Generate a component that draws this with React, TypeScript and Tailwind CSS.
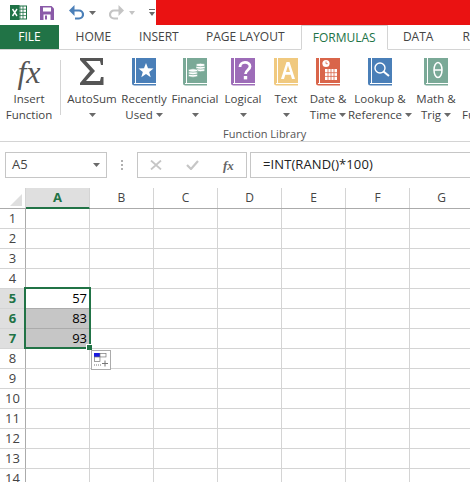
import type { ReactNode } from "react";

const font = { fontFamily: '"Open Sans", "Liberation Sans", sans-serif' };

function Caret({ className = "" }: { className?: string }) {
  return (
    <svg width="7" height="4" viewBox="0 0 7 4" className={className}>
      <path d="M0 0h7L3.5 4z" fill="#6a6a6a" />
    </svg>
  );
}

// book shaped icon used by most of the function library buttons
function Book({ color, children }: { color: string; children: ReactNode }) {
  return (
    <svg width="24" height="28" viewBox="0 0 24 28">
      <path d="M0 0h3v25h-1v1h22v1.500H2.500Q0 27.500 0 25z" fill={color} />
      <rect x="4" y="0" width="20" height="25" fill={color} />
      {children}
    </svg>
  );
}

const tileIcons: Record<string, ReactNode> = {
  recent: (
    <Book color="#4a7fb8">
      <path d="M14 5l2 5.200 5.500.3-4.300 3.500 1.500 5.300L14 16l-4.700 3.300 1.500-5.300-4.300-3.500 5.500-.3z" fill="#fff" />
    </Book>
  ),
  financial: (
    <Book color="#7aa997">
      <g fill="#fff" stroke="#7aa997" strokeWidth="0.7">
        <ellipse cx="17.500" cy="12" rx="4.600" ry="1.700" />
        <ellipse cx="17.500" cy="9.500" rx="4.600" ry="1.700" />
        <ellipse cx="17.500" cy="7" rx="4.600" ry="1.700" />
        <ellipse cx="10" cy="17.500" rx="4.600" ry="1.700" />
        <ellipse cx="10" cy="15" rx="4.600" ry="1.700" />
        <ellipse cx="10" cy="12.500" rx="4.600" ry="1.700" />
      </g>
    </Book>
  ),
  logical: (
    <Book color="#9d6cb8">
      <path d="M9 9c0-6 10-6 10-.5 0 3.500-4.500 3.500-4.500 7.500" fill="none" stroke="#fff" strokeWidth="2.800" />
      <rect x="12.800" y="18" width="3.400" height="3.400" fill="#fff" />
    </Book>
  ),
  text: (
    <Book color="#f0c97f">
      <path d="M12.500 4h3l5.500 17h-3l-1.300-4.200h-5.400L10 21H7zm1.500 3.500l-2 6.600h4z" fill="#fff" />
    </Book>
  ),
  date: (
    <Book color="#d9654a">
      <circle cx="10" cy="5.500" r="3.600" fill="#fff" />
      <path d="M10 3.500v2.200h1.800" fill="none" stroke="#d9654a" strokeWidth="0.8" />
      <rect x="9" y="11" width="12" height="11" fill="#fff" />
      <path d="M12 11v11M15 11v11M18 11v11M9 14.700h12M9 18.400h12" stroke="#d9654a" strokeWidth="0.8" />
    </Book>
  ),
  lookup: (
    <Book color="#4a7fb8">
      <circle cx="12" cy="10" r="5" fill="none" stroke="#fff" strokeWidth="1.400" />
      <path d="M15.500 13.500L21 18" stroke="#fff" strokeWidth="2" />
    </Book>
  ),
  math: (
    <Book color="#7aa997">
      <ellipse cx="14" cy="12" rx="4" ry="7.500" fill="none" stroke="#fff" strokeWidth="1.500" />
      <path d="M10 12h8" stroke="#fff" strokeWidth="1.500" />
    </Book>
  ),
};

function RibbonButton({
  width,
  icon,
  line1,
  line2,
  caretInline,
  caretBelow,
}: {
  width: string;
  icon: ReactNode;
  line1: string;
  line2?: string;
  caretInline?: boolean;
  caretBelow?: boolean;
}) {
  return (
    <div className={`${width} flex shrink-0 flex-col items-center`}>
      <div className="flex h-[28px] items-start justify-center">{icon}</div>
      <div className="mt-[5px] whitespace-nowrap text-[11.5px] leading-[16px] text-[#444444]">{line1}</div>
      {line2 && (
        <div className="flex items-center gap-[3px] whitespace-nowrap text-[11.5px] leading-[16px] text-[#444444]">
          {line2}
          {caretInline && <Caret />}
        </div>
      )}
      {caretBelow && (
        <div className="flex h-[16px] items-center">
          <Caret />
        </div>
      )}
    </div>
  );
}

const columns = ["A", "B", "C", "D", "E", "F", "G"];
const rowNumbers = [1, 2, 3, 4, 5, 6, 7, 8, 9, 10, 11, 12, 13, 14];
const cellValues: Record<number, string> = { 5: "57", 6: "83", 7: "93" };

export default function App() {
  return (
    <div className="h-[482px] w-[470px] overflow-hidden bg-white" style={font}>
      {/* quick access toolbar */}
      <div className="flex h-[25px] items-stretch">
        <div className="flex flex-1 items-center pl-[10px]">
          <svg width="17" height="15" viewBox="0 0 17 15">
            <rect x="6" y="1" width="10.500" height="13" fill="#fff" stroke="#1f7246" />
            <path d="M10 1v13M13 1v13M6 4.200h10M6 7.400h10M6 10.600h10" stroke="#1f7246" strokeWidth="0.8" />
            <rect x="0" y="0" width="9.500" height="15" fill="#1f7246" />
            <path d="M2.500 4l4.500 7M7 4l-4.500 7" stroke="#fff" strokeWidth="1.400" />
          </svg>
          <svg width="14" height="14" viewBox="0 0 14 14" className="ml-[13px]">
            <path d="M0 0h11.500L14 2.500V14H0z" fill="#8a5aa8" />
            <rect x="3" y="1.500" width="8" height="4" fill="#fff" />
            <rect x="3.500" y="8.500" width="7" height="5.500" fill="#fff" />
            <rect x="5" y="9.500" width="2" height="4" fill="#8a5aa8" />
          </svg>
          <svg width="15" height="15" viewBox="0 0 15 15" className="ml-[15px]">
            <path d="M4.500 5.500h5.500a4 4 0 0 1 0 8H6" fill="none" stroke="#4a7fb8" strokeWidth="2.200" />
            <path d="M0 5.500L5.500 0v11z" fill="#4a7fb8" />
          </svg>
          <Caret className="ml-[5px]" />
          <svg width="15" height="15" viewBox="0 0 15 15" className="ml-[13px]">
            <path d="M10.500 5.500H5a4 4 0 0 0 0 8h4" fill="none" stroke="#c4c4c4" strokeWidth="2.200" />
            <path d="M15 5.500L9.500 0v11z" fill="#c4c4c4" />
          </svg>
          <svg width="6" height="4" viewBox="0 0 6 4" className="ml-[5px]">
            <path d="M0 0h6L3 4z" fill="#c4c4c4" />
          </svg>
          <svg width="6" height="7" viewBox="0 0 6 7" className="ml-[14px]">
            <path d="M0 0h6v1H0z" fill="#6a6a6a" />
            <path d="M0 3h6L3 7z" fill="#6a6a6a" />
          </svg>
        </div>
        <div className="w-[314px] bg-[#ea1212]" />
      </div>

      {/* tabs */}
      <div className="flex h-[25px] border-b border-[#d4d4d4] text-[12px] text-[#444444]">
        <div className="flex w-[59px] items-center justify-center bg-[#217346] text-white">FILE</div>
        <div className="flex w-[69px] items-center justify-center">HOME</div>
        <div className="flex w-[62px] items-center justify-center">INSERT</div>
        <div className="flex w-[111px] items-center justify-center">PAGE LAYOUT</div>
        <div className="flex h-[25px] w-[87px] items-center justify-center border border-[#d4d4d4] border-b-white text-[#217346]">
          FORMULAS
        </div>
        <div className="flex w-[61px] items-center justify-center">DATA</div>
        <div className="pl-[14px] pt-[3px]">R</div>
      </div>

      {/* ribbon */}
      <div className="h-[92px] border-b border-[#d4d4d4]">
        <div className="flex h-[76px] pt-[8px]">
          <RibbonButton
            width="w-[58px]"
            icon={<span className="text-[32px] italic leading-[28px] text-[#555555]" style={{ fontFamily: '"Liberation Serif", serif' }}>fx</span>}
            line1="Insert"
            line2="Function"
          />
          <div className="ml-[2px] mr-[5px] mt-[2px] h-[55px] w-px shrink-0 bg-[#d4d4d4]" />
          <RibbonButton
            width="w-[52px]"
            icon={
              <svg width="24" height="27" viewBox="0 0 24 27">
                <path d="M0 0h23v7h-2l-1-4H6l9 10-9 10h14l1-4h2.500v8H0v-2l10-12L0 2z" fill="#555555" />
              </svg>
            }
            line1="AutoSum"
            caretBelow
          />
          <RibbonButton width="w-[52px]" icon={tileIcons.recent} line1="Recently" line2="Used" caretInline />
          <RibbonButton width="w-[50px]" icon={tileIcons.financial} line1="Financial" caretBelow />
          <RibbonButton width="w-[46px]" icon={tileIcons.logical} line1="Logical" caretBelow />
          <RibbonButton width="w-[40px]" icon={tileIcons.text} line1="Text" caretBelow />
          <RibbonButton width="w-[44px]" icon={tileIcons.date} line1="Date &" line2="Time" caretInline />
          <RibbonButton width="w-[60px]" icon={tileIcons.lookup} line1="Lookup &" line2="Reference" caretInline />
          <RibbonButton width="w-[52px]" icon={tileIcons.math} line1="Math &" line2="Trig" caretInline />
          <div className="mt-[49px] shrink-0 text-[11.5px] leading-[16px] text-[#444444]">Fu</div>
        </div>
        <div className="pl-[223px] text-[11px] leading-[15px] text-[#555555]">Function Library</div>
      </div>

      {/* formula bar */}
      <div className="mt-[10px] flex h-[26px] items-stretch pl-[5px]">
        <div className="flex w-[102px] items-center justify-between border border-[#c6c6c6] px-[6px] text-[13px] text-[#444444]">
          A5
          <Caret />
        </div>
        <div className="flex w-[30px] flex-col items-center justify-center gap-[2px]">
          <span className="h-[2px] w-[2px] bg-[#b0b0b0]" />
          <span className="h-[2px] w-[2px] bg-[#b0b0b0]" />
          <span className="h-[2px] w-[2px] bg-[#b0b0b0]" />
        </div>
        <div className="flex w-[110px] items-center border border-[#c6c6c6] pl-[12px]">
          <svg width="12" height="10" viewBox="0 0 12 10">
            <path d="M1 0.500l10 9M11 0.500l-10 9" stroke="#c6c6c6" strokeWidth="1.800" />
          </svg>
          <svg width="13" height="10" viewBox="0 0 13 10" className="ml-[24px]">
            <path d="M1 5l4 4 7-8" fill="none" stroke="#c6c6c6" strokeWidth="2.200" />
          </svg>
          <span className="ml-[24px] text-[13px] font-bold italic leading-none text-[#666666]" style={{ fontFamily: '"Liberation Serif", serif' }}>fx</span>
        </div>
        <div className="ml-[3px] flex flex-1 items-center border border-r-0 border-[#c6c6c6] pl-[12px] text-[13px] tracking-[0.1px] text-[#222222]">
          =INT(RAND()*100)
        </div>
      </div>

      {/* sheet */}
      <div className="relative mt-[10px]">
        <div className="flex h-[21px] border-b border-[#ababab]">
          <div className="flex w-[26px] shrink-0 items-end justify-end border-r border-[#d4d4d4] pb-[2px] pr-[3px]">
            <svg width="12" height="12" viewBox="0 0 12 12">
              <path d="M12 0v12H0z" fill="#dfdfdf" />
            </svg>
          </div>
          {columns.map((c) => (
            <div
              key={c}
              className={
                c === "A"
                  ? "-mb-px flex w-[64px] shrink-0 items-center justify-center border-b-2 border-r border-[#217346] border-r-[#d4d4d4] bg-[#dfdfdf] text-[13px] font-bold text-[#217346]"
                  : "flex w-[64px] shrink-0 items-center justify-center border-r border-[#d4d4d4] text-[12px] text-[#444444]"
              }
            >
              {c}
            </div>
          ))}
        </div>
        {rowNumbers.map((n) => {
          const active = n >= 5 && n <= 7;
          return (
            <div key={n} className="flex h-[20px]">
              <div
                className={
                  active
                    ? "flex w-[26px] shrink-0 items-center justify-center border-b border-r border-[#d4d4d4] border-r-[#ababab] bg-[#dfdfdf] text-[13px] font-bold text-[#217346]"
                    : "flex w-[26px] shrink-0 items-center justify-center border-b border-r border-[#d4d4d4] border-r-[#ababab] text-[13px] text-[#444444]"
                }
              >
                {n}
              </div>
              {columns.map((c, i) => (
                <div
                  key={c}
                  className={
                    i === 0 && (n === 6 || n === 7)
                      ? "flex w-[64px] shrink-0 items-center justify-end border-b border-r border-[#ababab] bg-[#c6c6c6] pr-[2px] text-[13px] text-black"
                      : i === 0 && n === 5
                        ? "flex w-[64px] shrink-0 items-center justify-end border-b border-r border-[#ababab] pr-[2px] text-[13px] text-black"
                        : "flex w-[64px] shrink-0 items-center justify-end border-b border-r border-[#d4d4d4] pr-[2px] text-[13px] text-black"
                  }
                >
                  {i === 0 ? cellValues[n] : null}
                </div>
              ))}
            </div>
          );
        })}

        {/* selection box and fill handle */}
        <div className="absolute left-[24px] top-[99px] h-[62px] w-[67px] border-2 border-[#217346]">
          <div className="absolute -bottom-[3px] -right-[3px] h-[6px] w-[6px] border-l border-t border-white bg-[#217346]" />
        </div>

        {/* paste options button */}
        <div className="absolute left-[91px] top-[162px] flex h-[20px] w-[20px] items-center justify-center border border-[#ababab] bg-white">
          <svg width="14" height="14" viewBox="0 0 14 14">
            <rect x="0" y="0" width="6" height="4" fill="#1a1ae0" />
            <rect x="6" y="0.350" width="6" height="3.600" fill="#fff" stroke="#777777" strokeWidth="0.7" />
            <rect x="0.350" y="4" width="5.600" height="4.500" fill="#fff" stroke="#777777" strokeWidth="0.7" />
            <path d="M0 12h7" stroke="#777777" strokeDasharray="1 1" />
            <path d="M11 7.500v6M8 10.500h6" stroke="#777777" />
          </svg>
        </div>
      </div>
    </div>
  );
}
